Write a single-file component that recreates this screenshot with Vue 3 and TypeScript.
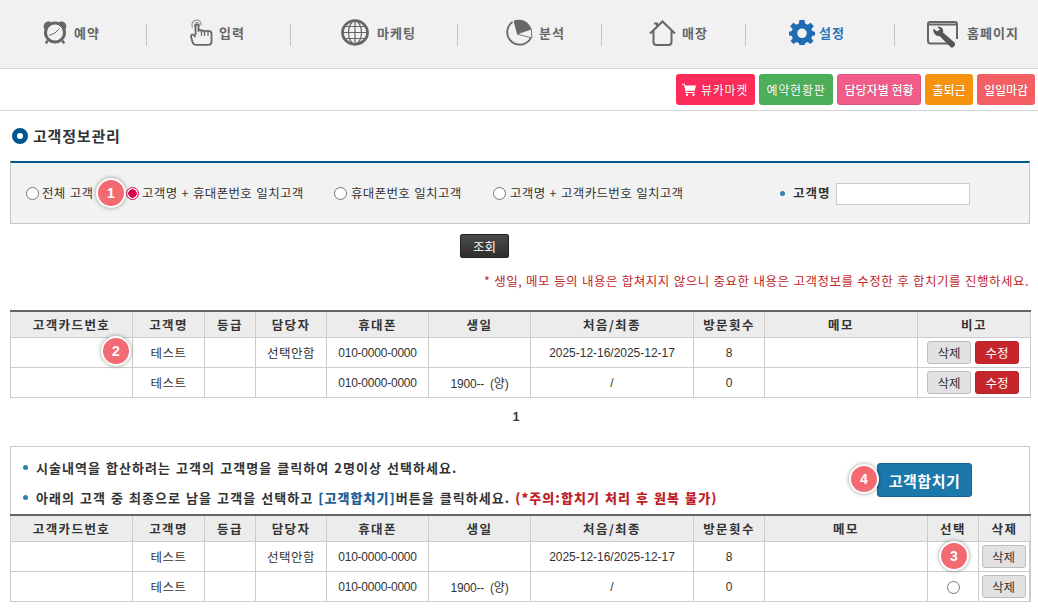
<script setup lang="ts">
const navItems = [
  { label: '예약', icon: 'clock' },
  { label: '입력', icon: 'hand' },
  { label: '마케팅', icon: 'globe' },
  { label: '분석', icon: 'pie' },
  { label: '매장', icon: 'house' },
  { label: '설정', icon: 'gear' },
  { label: '홈페이지', icon: 'web' },
]
const radios = [
  { label: '전체 고객', cls: 'r1', checked: false },
  { label: '고객명 + 휴대폰번호 일치고객', cls: 'r2', checked: true },
  { label: '휴대폰번호 일치고객', cls: 'r3', checked: false },
  { label: '고객명 + 고객카드번호 일치고객', cls: 'r4', checked: false },
]
const rows = [
  { name: '테스트', mgr: '선택안함', phone: '010-0000-0000', birth: '', dates: '2025-12-16/2025-12-17', visits: '8' },
  { name: '테스트', mgr: '', phone: '010-0000-0000', birth: '1900-- (양)', dates: '/', visits: '0' },
]
</script>

<template>
  <div class="page">
    <nav class="nav">
      <a v-for="item in navItems" :key="item.label" class="nav-item" :class="{ active: item.icon === 'gear' }">
        <svg v-if="item.icon === 'clock'" class="ic" width="24" height="25" viewBox="0 0 24 25">
          <path d="M.8 8C0 3.500 3 .8 7 1.500 L8 3 L1.800 9Z M23.200 8C24 3.500 21 .8 17 1.500L16 3L22.200 9Z" fill="#666"/>
          <circle cx="12" cy="12.500" r="9.500" fill="#f1f1f1" stroke="#666" stroke-width="3"/>
          <path d="M6 15.500 L12 13 L16.500 8.500" fill="none" stroke="#666" stroke-width="1"/>
          <path d="M4.500 20.500 L3 23.500 M19.500 20.500 L21 23.500" stroke="#666" stroke-width="2.500"/>
        </svg>
        <svg v-else-if="item.icon === 'hand'" class="ic" width="23" height="27" viewBox="0 0 23 27">
          <path d="M2.500 9 C1 6 2 1.500 6.500 1.200 C10 1 11.500 3.500 11 6.500" fill="none" stroke="#999" stroke-width="1.200"/>
          <path d="M4.500 7.500 C4 5 5.500 3.500 7 3.500 C8.800 3.500 9.800 5 9.300 7" fill="none" stroke="#888" stroke-width="1"/>
          <path d="M5.500 16 V7 C5.500 5 8.500 5 8.500 7 V12 C8.500 10.500 11.500 10.500 11.500 12.500 C11.500 11 14.500 11 14.500 13 C14.500 11.500 21.500 11 21.500 14.500 V23 C21.500 25 20 25.800 18.500 25.800 H6 C4 25.800 3 24.500 2.500 23 L1 17.500 C.8 15.500 3.500 14.500 5.500 18" fill="#f1f1f1" stroke="#666" stroke-width="1.800" stroke-linejoin="round"/>
          <path d="M11.500 12.500 V17 M14.500 13 V17 M18 13 V17" stroke="#666" stroke-width="1.200"/>
        </svg>
        <svg v-else-if="item.icon === 'globe'" class="ic" width="28" height="27" viewBox="0 0 28 27">
          <g fill="none" stroke="#666">
            <ellipse cx="14" cy="13.500" rx="6.500" ry="11.500" stroke-width="1.200"/>
            <path d="M14 2 V25 M2 13.500 H26 M4 7.500 H24 M4 19.500 H24" stroke-width="1.200"/>
            <ellipse cx="14" cy="13.500" rx="12.500" ry="11.800" stroke-width="2.800"/>
          </g>
        </svg>
        <svg v-else-if="item.icon === 'pie'" class="ic" width="28" height="27" viewBox="0 0 28 27">
          <path d="M26.300 18 A12.500 12.500 0 1 1 7.500 3" fill="none" stroke="#666" stroke-width="1.800"/>
          <path d="M12 15 L26.300 10 L26.800 19Z" fill="#f1f1f1" stroke="#777" stroke-width="1"/>
          <path d="M12 15 L8.500 1.800 A13 13 0 0 1 26.300 10 Z" fill="#666"/>
        </svg>
        <svg v-else-if="item.icon === 'house'" class="ic" width="27" height="26" viewBox="0 0 27 26">
          <path d="M1 13.500 L13.500 1.500 L26 13.500 M4.500 11 V22 C4.500 24 5.500 25 7.500 25 H19.500 C21.500 25 22.500 24 22.500 22 V11 M5 3.500 H8 V7.500" fill="none" stroke="#666" stroke-width="2"/>
        </svg>
        <svg v-else-if="item.icon === 'gear'" class="ic" width="26" height="25" viewBox="0 0 26 25">
          <path fill="#1f6cb4" fill-rule="evenodd" d="M10.500 0 H15.500 L16.200 3.600 L18.500 4.700 L21.800 2.800 L24.800 6.300 L22.400 9 L23.100 11 L26 11.700 V15.300 L23.100 16 L22.300 18.300 L24.500 21 L21.500 24 L18.500 22 L16.200 23 L15.500 25 H10.500 L9.800 23 L7.500 22 L4.500 24 L1.500 21 L3.700 18.300 L2.900 16 L0 15.300 V11.700 L2.900 11 L3.600 9 L1.200 6.300 L4.200 2.800 L7.500 4.700 L9.800 3.600 Z M13 8.500 A4.800 4.800 0 1 0 13 18.100 A4.800 4.800 0 1 0 13 8.500Z"/>
        </svg>
        <svg v-else class="ic" width="32" height="29" viewBox="0 0 32 29">
          <path d="M25 22.500 H3.500 C2 22.500 1 21.500 1 20 V3 C1 1.800 2 1 3 1 H28 C29 1 30 1.800 30 3 V18" fill="none" stroke="#666" stroke-width="2"/>
          <path d="M1 3.500 H30" stroke="#666" stroke-width="2"/>
          <path d="M6.500 7.500 L10 10.500 L13 8.500 L10.500 6 C14 5 17 8 16 11.500 L27.500 21.500 C29.500 24 26 28 23.500 26 L12.500 15 C9 15.500 5.500 12 6.500 7.500Z" fill="#555"/>
        </svg>
        <span class="nav-label">{{ item.label }}</span>
      </a>
    </nav>

    <div class="toolbar">
      <button class="tb market">
        <svg width="14" height="13" viewBox="0 0 14 13" class="cart">
          <path d="M0 .8 H2.800 L3.200 2.500 H14 L12.800 7.800 H4.500 L4.800 9 H12.500 V10 H3.800 L2 1.800 H0Z" fill="#fff"/>
          <circle cx="5" cy="11.800" r="1.200" fill="#fff"/><circle cx="11.500" cy="11.800" r="1.200" fill="#fff"/>
        </svg>뷰카마켓
      </button>
      <button class="tb status">예약현황판</button>
      <button class="tb staff">담당자별 현황</button>
      <button class="tb attend">출퇴근</button>
      <button class="tb close">일일마감</button>
    </div>

    <main class="content">
      <h1 class="title"><span class="title-dot"></span>고객정보관리</h1>

      <section class="search">
        <label v-for="r in radios" :key="r.label" class="radio-label" :class="r.cls">
          <input type="radio" class="radio" name="match" :checked="r.checked" />{{ r.label }}
        </label>
        <span class="field-name">고객명</span>
        <input type="text" class="field" />
        <span class="badge b1">1</span>
      </section>

      <div class="query-wrap"><button class="query">조회</button></div>
      <p class="note">* 생일, 메모 등의 내용은 합쳐지지 않으니 중요한 내용은 고객정보를 수정한 후 합치기를 진행하세요.</p>

      <div class="table-wrap">
        <table class="grid">
          <colgroup>
            <col class="c1" /><col class="c2" /><col class="c3" /><col class="c4" /><col class="c5" /><col class="c6" /><col class="c7" /><col class="c8" /><col class="c9" /><col class="c10" />
          </colgroup>
          <thead>
            <tr><th>고객카드번호</th><th>고객명</th><th>등급</th><th>담당자</th><th>휴대폰</th><th>생일</th><th>처음/최종</th><th>방문횟수</th><th>메모</th><th>비고</th></tr>
          </thead>
          <tbody>
            <tr v-for="(row, i) in rows" :key="i">
              <td></td><td>{{ row.name }}</td><td></td><td>{{ row.mgr }}</td>
              <td class="num">{{ row.phone }}</td><td class="num">{{ row.birth }}</td><td class="num dates">{{ row.dates }}</td><td class="num">{{ row.visits }}</td><td></td>
              <td><div class="actions"><button class="mini gray">삭제</button><button class="mini red">수정</button></div></td>
            </tr>
          </tbody>
        </table>
        <span class="badge b2">2</span>
      </div>

      <div class="pager">1</div>

      <section class="merge">
        <div class="merge-head">
          <p class="tip"><i class="dot"></i>시술내역을 합산하려는 고객의 고객명을 클릭하여 2명이상 선택하세요.</p>
          <p class="tip second"><i class="dot"></i>아래의 고객 중 최종으로 남을 고객을 선택하고 <b class="blue">[고객합치기]</b>버튼을 클릭하세요. <b class="warn">(*주의:합치기 처리 후 원복 불가)</b></p>
          <button class="merge-btn">고객합치기</button>
          <span class="badge b4">4</span>
        </div>
        <div class="table-wrap">
          <table class="grid second-grid">
            <colgroup>
              <col class="c1" /><col class="c2" /><col class="c3" /><col class="c4" /><col class="c5" /><col class="c6" /><col class="c7" /><col class="c8" /><col class="d9" /><col class="d10" /><col class="d11" />
            </colgroup>
            <thead>
              <tr><th>고객카드번호</th><th>고객명</th><th>등급</th><th>담당자</th><th>휴대폰</th><th>생일</th><th>처음/최종</th><th>방문횟수</th><th>메모</th><th>선택</th><th>삭제</th></tr>
            </thead>
            <tbody>
              <tr v-for="(row, i) in rows" :key="i">
                <td></td><td>{{ row.name }}</td><td></td><td>{{ row.mgr }}</td>
                <td class="num">{{ row.phone }}</td><td class="num">{{ row.birth }}</td><td class="num dates">{{ row.dates }}</td><td class="num">{{ row.visits }}</td><td></td>
                <td><input type="radio" class="radio solo" name="keep" /></td>
                <td><div class="actions"><button class="mini gray">삭제</button></div></td>
              </tr>
            </tbody>
          </table>
          <span class="badge b3">3</span>
        </div>
      </section>
    </main>
  </div>
</template>

<style scoped>
.page {
  width: 1038px;
  height: 611px;
  overflow: hidden;
  background: #fff;
  color: #333;
  font-family: "Noto Sans CJK KR", "Liberation Sans", sans-serif;
  font-size: 13px;
}
.nav {
  display: grid;
  grid-template-columns: 146px 144px 167px 144px 144px 149px 144px;
  height: 68px;
  background: #f1f1f1;
  border-bottom: 1px solid #d6d6d6;
}
.nav-item {
  position: relative;
  display: flex;
  align-items: center;
  color: #666;
  font-weight: 700;
  font-size: 13px;
}
.nav-item + .nav-item::before {
  content: "";
  position: absolute;
  left: 0;
  top: 24px;
  height: 22px;
  width: 1px;
  background: #c4c4c4;
}
.nav-item:nth-child(1) { padding-left: 43px; }
.nav-item:nth-child(2) { padding-left: 44px; }
.nav-item:nth-child(3) { padding-left: 51px; }
.nav-item:nth-child(4) { padding-left: 48px; }
.nav-item:nth-child(5) { padding-left: 48px; }
.nav-item:nth-child(6) { padding-left: 44px; }
.nav-item:nth-child(7) { padding-left: 33px; }
.ic { flex: none; margin-right: 7px; margin-top: -3px; }
.nav-item:nth-child(2) .ic { margin-right: 6px; }
.nav-item:nth-child(3) .ic { margin-right: 8px; }
.nav-item:nth-child(4) .ic { margin-right: 6px; }
.nav-item:nth-child(5) .ic { margin-right: 6px; }
.nav-item:nth-child(6) .ic { margin-right: 4px; }
.nav-item:nth-child(7) .ic { margin-right: 8px; margin-top: 3px; }
.nav-label { margin-top: -4px; letter-spacing: 1px; }
.active { color: #2a72b8; }

.toolbar {
  display: flex;
  justify-content: flex-end;
  gap: 4px;
  height: 42px;
  padding: 5px 3px 0 0;
  box-sizing: border-box;
  border-bottom: 1px solid #d6d6d6;
}
.tb {
  height: 31px;
  padding: 0;
  border: 1px solid transparent;
  border-radius: 3px;
  color: #fff;
  font: 500 12px "Noto Sans CJK KR", sans-serif;
  display: flex;
  align-items: center;
  justify-content: center;
  text-shadow: 0 0 1px rgba(0, 0, 0, .25);
}
.market { width: 79px; background: #fc2c5a; font-weight: 400; letter-spacing: .7px; justify-content: flex-start; padding-left: 5px; }
.status { width: 74px; background: #4cae58; font-weight: 400; letter-spacing: .8px; }
.staff { width: 84px; background: #f25c88; border-color: #e0517c; }
.attend { width: 48px; background: #f7930f; }
.close { width: 58px; background: #f35f64; }
.cart { margin-right: 5px; }

.content { padding: 0 8px 0 10px; }
.title {
  display: flex;
  align-items: center;
  margin: 0;
  height: 49px;
  padding-left: 2px;
  font-size: 15px;
  font-weight: 700;
  color: #333;
  letter-spacing: .8px;
}
.title-dot {
  width: 6px;
  height: 6px;
  margin-right: 5px;
  border: 5px solid #00568f;
  border-radius: 50%;
  background: #fff;
}
.search {
  position: relative;
  display: flex;
  align-items: center;
  box-sizing: border-box;
  width: 1020px;
  height: 63px;
  margin-top: 1px;
  background: #f2f2f2;
  border: 1px solid #c6c6c6;
  border-top: 2px solid #00588a;
  font-size: 12.500px;
}
.radio-label { position: absolute; top: 21px; display: flex; align-items: center; color: #333; line-height: 17px; letter-spacing: .33px; word-spacing: 1px; }
.r1 { left: 15px; }
.r2 { left: 115px; }
.r3 { left: 323px; }
.r4 { left: 482px; }
.radio {
  appearance: none;
  width: 13px;
  height: 13px;
  margin: 2px 3px 0 0;
  border: 1px solid #767676;
  border-radius: 50%;
  background: #fff;
  flex: none;
}
.r3 .radio, .r4 .radio { margin-right: 4px; }
.radio:checked {
  border: 1px solid #e0004f;
  background: radial-gradient(circle, #e0004f 0 4px, #fff 4.500px);
}
.solo { display: block; margin: 1px auto 0; }
.field-name {
  position: absolute;
  left: 769px;
  top: 21px;
  font-weight: 700;
  padding-left: 13px;
  line-height: 17px;
  letter-spacing: 1px;
}
.field-name::before {
  content: "";
  position: absolute;
  left: 0;
  top: 7px;
  width: 5px;
  height: 5px;
  border-radius: 50%;
  background: #2f82ad;
}
.field {
  position: absolute;
  left: 825px;
  top: 20px;
  width: 134px;
  height: 22px;
  box-sizing: border-box;
  border: 1px solid #ccc;
  background: #fff;
}
.query-wrap { display: flex; justify-content: center; margin-top: 10px; padding-right: 71px; }
.query {
  width: 49px;
  height: 24px;
  border: 1px solid #222;
  border-radius: 2px;
  background: linear-gradient(#4a4a4a, #2f2f2f);
  color: #fff;
  font: 12.500px "Noto Sans CJK KR", sans-serif;
  padding: 0;
}
.note {
  width: 1019px;
  margin: 12px 0 0;
  height: 21px;
  line-height: 21px;
  text-align: right;
  color: #c01f2a;
  font-size: 12.500px;
  letter-spacing: .5px;
  word-spacing: .6px;
  white-space: nowrap;
}
.table-wrap { position: relative; width: 1020px; }
.note + .table-wrap { margin-top: 19px; }
.grid {
  width: 1020px;
  table-layout: fixed;
  border-collapse: collapse;
  font-size: 12.500px;
}
.c1 { width: 122px; } .c2 { width: 72px; } .c3 { width: 51px; } .c4 { width: 71px; }
.c5 { width: 102px; } .c6 { width: 102px; } .c7 { width: 163px; } .c8 { width: 71px; }
.c9 { width: 153px; } .c10 { width: 113px; }
.d9 { width: 163px; } .d10 { width: 51px; } .d11 { width: 52px; }
th {
  height: 25px;
  padding: 0;
  background: #ececec;
  border: 1px solid #ccc;
  border-top: 2px solid #666;
  font-weight: 700;
  color: #333;
  letter-spacing: 1.4px;
}
td {
  height: 29px;
  padding: 0;
  border: 1px solid #ccc;
  text-align: center;
  color: #333;
  font-weight: 400;
  letter-spacing: .5px;
}
.num { font: 12px "Liberation Sans", "Noto Sans CJK KR", sans-serif; letter-spacing: -.22px; word-spacing: 3px; }
.dates { letter-spacing: -.02px; }
.actions { display: flex; justify-content: center; gap: 4px; padding-right: 2px; }
.mini {
  width: 44px;
  height: 23px;
  padding: 0;
  border-radius: 3px;
  border: 1px solid #bdbdbd;
  font: 12.500px "Noto Sans CJK KR", sans-serif;
}
.gray { background: #e2e2e2; color: #333; }
.red { background: #c4262c; border-color: #b82228; color: #fff; }
.pager { width: 1012px; margin-top: 8px; height: 22px; text-align: center; font: 700 12px/22px "Liberation Sans", sans-serif; color: #333; }
.merge {
  width: 1020px;
  box-sizing: border-box;
  margin-top: 18px;
  border: 1px solid #ccc;
  border-bottom: 0;
}
.merge .table-wrap { width: 1018px; }
.second-grid { width: 1020px; margin-left: -1px; }
.merge-head { position: relative; height: 67px; box-sizing: border-box; padding-top: 11px; }
.tip { position: relative; margin: 0; padding-left: 25px; height: 20px; line-height: 20px; font-weight: 700; font-size: 13px; color: #333; letter-spacing: 1.05px; word-spacing: 1px; white-space: nowrap; }
.second { margin-top: 10px; }
.dot { position: absolute; left: 12px; top: 7px; width: 5px; height: 5px; border-radius: 50%; background: #2f82ad; }
.blue { color: #1f5f96; }
.warn { color: #c01f2a; }
.merge-btn {
  position: absolute;
  left: 866px;
  top: 16px;
  width: 95px;
  height: 34px;
  padding: 0;
  border: 1px solid #14648f;
  border-radius: 3px;
  background: #1b78ab;
  color: #fff;
  font: 700 15px "Noto Sans CJK KR", sans-serif;
  letter-spacing: .5px;
}
.badge {
  position: absolute;
  width: 26px;
  height: 26px;
  border: 2.500px solid #fff;
  border-radius: 50%;
  background: #f46a72;
  color: #fff;
  font: 700 14px/26px "Liberation Sans", sans-serif;
  text-align: center;
  box-shadow: 0 0 4px rgba(0, 0, 0, .4);
}
.b1 { left: 85px; top: 15px; }
.b2 { left: 91px; top: 26px; }
.b3 { left: 928px; top: 27px; }
.b4 { left: 838px; top: 17px; }
</style>

<style>
html, body { margin: 0; background: #fff; }
</style>
